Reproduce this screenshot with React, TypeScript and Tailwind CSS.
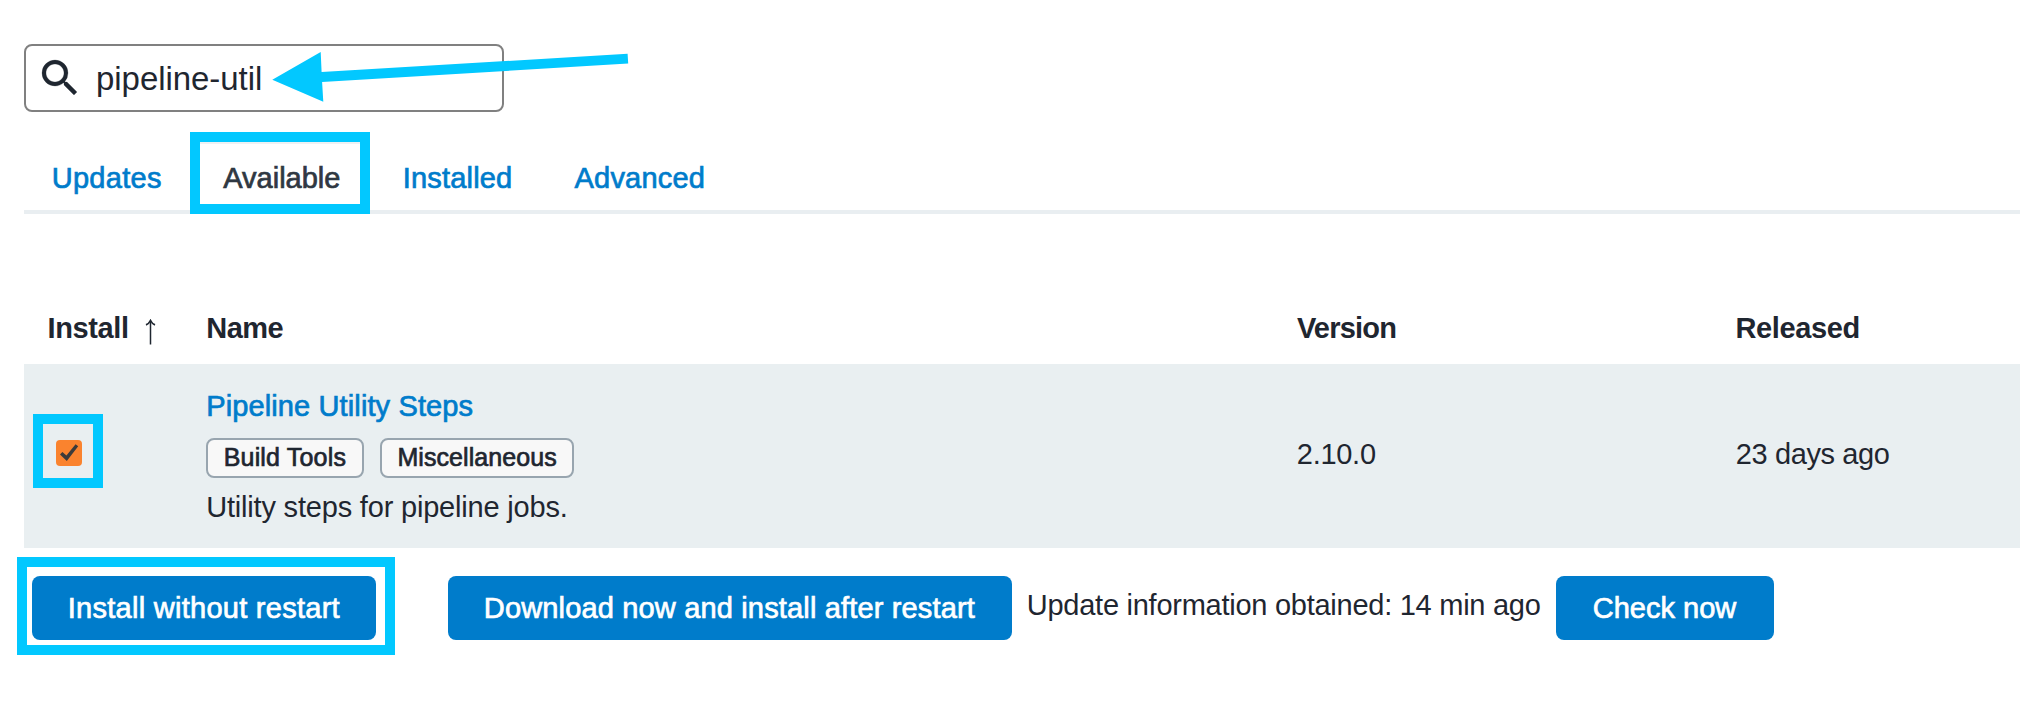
import type { ReactNode } from 'react';

const medium = '[-webkit-text-stroke:0.7px_currentColor]';

function SearchIcon({ className }: { className: string }) {
  return (
    <svg viewBox="0 0 24 24" fill="currentColor" stroke="currentColor" strokeWidth="0.12" className={className}>
      <path d="M15.5 14h-.79l-.28-.27A6.471 6.471 0 0 0 16 9.5 6.5 6.5 0 1 0 9.5 16c1.61 0 3.09-.59 4.23-1.57l.27.28v.79l5 4.99L20.49 19l-4.99-5zm-6 0C7.01 14 5 11.99 5 9.5S7.01 5 9.5 5 14 7.01 14 9.5 11.99 14 9.5 14z" />
    </svg>
  );
}

function Tab({ children, className }: { children: ReactNode; className: string }) {
  return (
    <a className={`block h-8 whitespace-nowrap ${medium} ${className}`}>{children}</a>
  );
}

function Tag({ children, className }: { children: ReactNode; className: string }) {
  return (
    <span
      className={`block h-10 shrink-0 whitespace-nowrap rounded-lg border-2 border-[#98a5af] bg-[#f8f8f8] pt-[3px] text-[25px] leading-[28px] ${medium} ${className}`}
    >
      {children}
    </span>
  );
}

function Button({ children, className }: { children: ReactNode; className: string }) {
  return (
    <button
      className={`block h-16 shrink-0 whitespace-nowrap rounded-lg bg-[#007ccb] text-left text-white ${medium} ${className}`}
    >
      {children}
    </button>
  );
}

function Highlight({ className }: { className: string }) {
  return <div className={`pointer-events-none absolute border-[10px] border-[#02c8ff] ${className}`} />;
}

export default function App() {
  return (
    <div className="relative h-[712px] w-[2020px] overflow-hidden bg-white pt-[44px] font-['Liberation_Sans',Arial,sans-serif] text-[29px] leading-8 text-[#1f2630]">
      <div className="ml-6 flex h-[68px] w-[480px] rounded-lg border-2 border-[#808080] bg-white">
        <SearchIcon className="ml-[10px] mt-2 size-12 shrink-0 text-[#1f2630]" />
        <span className="ml-3 mt-[14px] text-[33px] leading-[37px] tracking-[-0.05px]">pipeline-util</span>
      </div>

      <nav className="ml-6 flex h-[102px] border-b-4 border-[#e9eef1] pt-[50px] text-[#007ccb]">
        <Tab className="ml-[27.7px] w-[171.6px] tracking-[0.3px]">Updates</Tab>
        <Tab className="w-[179.5px] text-[#2f3842]">Available</Tab>
        <Tab className="w-[171.7px] tracking-[0.18px]">Installed</Tab>
        <Tab className="tracking-[0.22px]">Advanced</Tab>
      </nav>

      <div className="grid h-[150px] grid-cols-[206.2px_1090.3px_439px_1fr] pt-[98px] font-bold">
        <div className="flex pl-[47.6px]">
          <span className="w-[97.4px] tracking-[-0.4px]">Install</span>
          <svg width="12" height="26" viewBox="0 0 12 26" className="mt-[7px]" fill="none" stroke="#1f2630">
            <path d="M5.5 1.5V25.5" strokeWidth="1.5" />
            <path d="M1 5.9Q4 4.6 5.5 1.5Q7 4.6 10 5.9" strokeWidth="1.7" />
          </svg>
        </div>
        <span className="tracking-[-0.5px]">Name</span>
        <span className="pl-[0.4px] tracking-[-0.78px]">Version</span>
        <span className="tracking-[-0.38px]">Released</span>
      </div>

      <div className="ml-6 grid h-[184px] grid-cols-[182.2px_1090.6px_439px_1fr] bg-[#e9eff1]">
        <div className="pl-8 pt-[76px]">
          <svg width="26" height="26" viewBox="0 0 26 26">
            <rect width="26" height="26" rx="4" fill="#fa832e" />
            <path d="M4 14.4L6.4 11.9L10.4 15.6L19.6 4.2L22.2 6.2L10.8 21Z" fill="#3b3b3b" />
          </svg>
        </div>
        <div className="pt-[26px]">
          <a className={`block text-[#007ccb] tracking-[0.12px] ${medium}`}>Pipeline Utility Steps</a>
          <div className="ml-[-0.2px] mt-4 flex gap-4">
            <Tag className="w-[158px] pl-[15.7px] tracking-[0.18px]">Build Tools</Tag>
            <Tag className="w-[194px] pl-[15.4px] tracking-[0.08px]">Miscellaneous</Tag>
          </div>
          <p className="mt-[13px] tracking-[-0.19px]">Utility steps for pipeline jobs.</p>
        </div>
        <span className="pt-[74px] tracking-[-0.28px]">2.10.0</span>
        <span className="pt-[74px] tracking-[-0.38px]">23 days ago</span>
      </div>

      <div className="ml-8 mt-7 flex">
        <Button className="w-[344px] pl-[35.8px] tracking-[0.27px]">Install without restart</Button>
        <Button className="ml-[72px] w-[564px] pl-[35.8px] tracking-[0.16px]">Download now and install after restart</Button>
        <span className="ml-[14.8px] mt-[13px] w-[529.2px] shrink-0 whitespace-nowrap tracking-[-0.26px]">
          Update information obtained: 14 min ago
        </span>
        <Button className="w-[218px] pl-[36.8px] tracking-[0px]">Check now</Button>
      </div>

      <Highlight className="left-[190px] top-[132px] h-[82px] w-[180px]" />
      <div className="absolute left-[200px] top-[142px] h-[2px] w-[160px] bg-[#eef1f3]" />
      <Highlight className="left-[33px] top-[414px] h-[74px] w-[70px]" />
      <Highlight className="left-[17px] top-[557px] h-[98px] w-[378px]" />
      <svg width="360" height="56" viewBox="0 0 360 56" className="pointer-events-none absolute left-[270px] top-[50px]">
        <path d="M2.3 29.8L50.7 2L51.6 22L357.6 3.8L358.2 13.6L52.1 32L53.3 51.7Z" fill="#02c8ff" />
      </svg>
    </div>
  );
}
